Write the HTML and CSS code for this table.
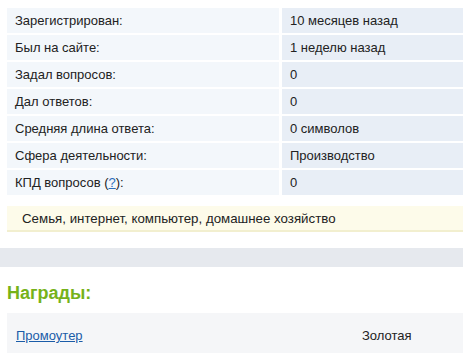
FILE: index.html
```html
<!DOCTYPE html>
<html lang="ru">
<head>
<meta charset="utf-8">
<link rel="stylesheet" href="styles.css">
</head>
<body>
<div class="page">
  <div class="stats">
    <div class="k">Зарегистрирован:</div><div class="v">10 месяцев назад</div>
    <div class="k">Был на сайте:</div><div class="v">1 неделю назад</div>
    <div class="k">Задал вопросов:</div><div class="v">0</div>
    <div class="k">Дал ответов:</div><div class="v">0</div>
    <div class="k">Средняя длина ответа:</div><div class="v">0 символов</div>
    <div class="k">Сфера деятельности:</div><div class="v">Производство</div>
    <div class="k">КПД вопросов (<a href="#" class="q">?</a>):</div><div class="v">0</div>
  </div>
  <div class="hobby">Семья, интернет, компьютер, домашнее хозяйство</div>
</div>
<div class="band"></div>
<div class="page">
  <h2 class="title">Награды:</h2>
  <div class="award">
    <a href="#" class="award-name">Промоутер</a>
    <span class="award-level">Золотая</span>
  </div>
</div>
</body>
</html>
```
FILE: styles.css
```css
html, body {
  margin: 0;
  padding: 0;
  background: #fff;
}
body {
  font-family: "Liberation Sans", Arial, sans-serif;
  font-size: 13px;
  color: #222;
  width: 463px;
  height: 353px;
  overflow: hidden;
}
.page {
  padding-left: 7px;
}
.stats {
  display: grid;
  grid-template-columns: 272px 1fr;
  grid-auto-rows: 25px;
  column-gap: 3px;
  row-gap: 2px;
  padding-top: 8px;
}
.k, .v {
  display: flex;
  align-items: center;
  padding-left: 8px;
}
.k { background: #f3f7fb; }
.v { background: #e8eef6; }
.q { color: #2a6ebb; }
.hobby {
  margin-top: 11px;
  height: 24px;
  background: #fdfbea;
  border-bottom: 2px solid #f2efcf;
  display: flex;
  align-items: center;
  padding-left: 15px;
  font-size: 13.3px;
}
.band {
  margin-top: 16px;
  height: 19px;
  background: #e6e9ee;
}
.title {
  margin: 0;
  padding-top: 15px;
  height: 31px;
  font-size: 18px;
  font-weight: bold;
  color: #76b21a;
  line-height: 22px;
}
.award {
  margin-top: 0;
  height: 45px;
  background: #f5f6f8;
  display: flex;
  align-items: center;
  padding-left: 9px;
}
.award-name {
  color: #1a5ca8;
  width: 346px;
}
.award-level {
  color: #222;
}
```
